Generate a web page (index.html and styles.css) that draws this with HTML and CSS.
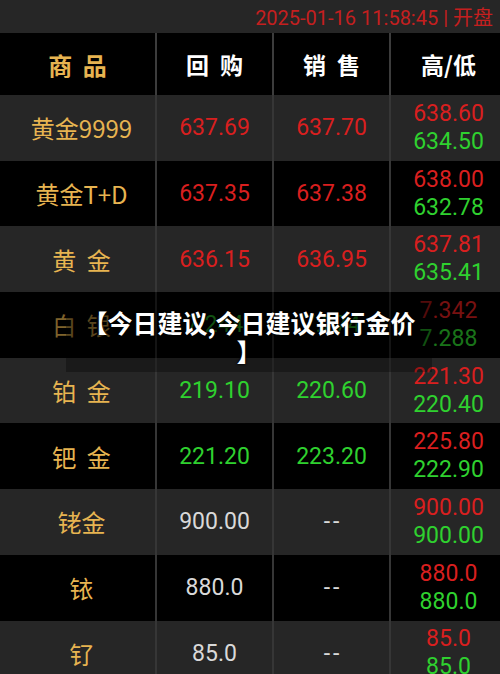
FILE: index.html
```html
<html lang="zh-CN">

<head>
    <meta charset="UTF-8">
    <meta name="viewport" content="width=device-width, initial-scale=1.0">
    <title>金价</title>
    <link rel="stylesheet" href="styles.css">
</head>

<body>
    <div class="topbar">2025-01-16 11:58:45 | 开盘</div>

    <div class="price-table">
        <div class="row head">
            <div class="cell name">商 品</div>
            <div class="cell">回 购</div>
            <div class="cell">销 售</div>
            <div class="cell hl">高/低</div>
        </div>
        <div class="row odd">
            <div class="cell name">黄金9999</div>
            <div class="cell num red">637.69</div>
            <div class="cell num red">637.70</div>
            <div class="cell hl num"><span class="red">638.60</span><span class="green">634.50</span></div>
        </div>
        <div class="row">
            <div class="cell name">黄金T+D</div>
            <div class="cell num red">637.35</div>
            <div class="cell num red">637.38</div>
            <div class="cell hl num"><span class="red">638.00</span><span class="green">632.78</span></div>
        </div>
        <div class="row odd">
            <div class="cell name">黄 金</div>
            <div class="cell num red">636.15</div>
            <div class="cell num red">636.95</div>
            <div class="cell hl num"><span class="red">637.81</span><span class="green">635.41</span></div>
        </div>
        <div class="row">
            <div class="cell name">白 银</div>
            <div class="cell num green">7.244</div>
            <div class="cell num green">7.274</div>
            <div class="cell hl num"><span class="red">7.342</span><span class="green">7.288</span></div>
        </div>
        <div class="row odd">
            <div class="cell name">铂 金</div>
            <div class="cell num green">219.10</div>
            <div class="cell num green">220.60</div>
            <div class="cell hl num"><span class="red">221.30</span><span class="green">220.40</span></div>
        </div>
        <div class="row">
            <div class="cell name">钯 金</div>
            <div class="cell num green">221.20</div>
            <div class="cell num green">223.20</div>
            <div class="cell hl num"><span class="red">225.80</span><span class="green">222.90</span></div>
        </div>
        <div class="row odd">
            <div class="cell name">铑金</div>
            <div class="cell num plain">900.00</div>
            <div class="cell num plain dash">--</div>
            <div class="cell hl num"><span class="red">900.00</span><span class="green">900.00</span></div>
        </div>
        <div class="row">
            <div class="cell name">铱</div>
            <div class="cell num plain">880.0</div>
            <div class="cell num plain dash">--</div>
            <div class="cell hl num"><span class="red">880.0</span><span class="green">880.0</span></div>
        </div>
        <div class="row odd">
            <div class="cell name">钌</div>
            <div class="cell num plain">85.0</div>
            <div class="cell num plain dash">--</div>
            <div class="cell hl num"><span class="red">85.0</span><span class="green">85.0</span></div>
        </div>

        <!-- title banner over the table -->
        <div class="banner">
            <div class="banner-title">【今日建议,今日建议银行金价<br>】</div>
        </div>
    </div>
</body>

</html>
```

FILE: styles.css
```css
body {
    margin: 0;
    background-color: #262626;
    font-family: Roboto, "Noto Sans CJK SC", sans-serif;
    overflow: hidden;
}

.topbar {
    height: 33px;
    display: flex;
    justify-content: flex-end;
    align-items: center;
    padding-right: 7px;
    color: #c41f1f;
    font-size: 20px;
}

.price-table {
    position: relative;
}

.row {
    display: grid;
    grid-template-columns: 155px 117px 117px 111px;
    height: 65.7px;
    background-color: #000;
}

.row.odd {
    background-color: #262626;
}

.row.head {
    height: 62px;
    color: #fff;
    font-family: "Noto Sans CJK SC", sans-serif;
    font-weight: 700;
    font-size: 23px;
    word-spacing: 6px;
}

.cell {
    display: flex;
    justify-content: center;
    align-items: center;
    border-left: 2px solid #363636;
}

.cell:first-child {
    border-left: none;
}

.row.head .cell {
    border-left-color: #3c3c3c;
}

.row.head .name {
    padding-left: 0;
}

.name {
    padding-left: 8px;
    color: #e7b451;
    font-family: "Noto Sans CJK SC", sans-serif;
    font-size: 24px;
    word-spacing: 5px;
}

.num {
    font-size: 23px;
}

.dash {
    letter-spacing: 3px;
    padding-left: 3px;
}

.hl {
    flex-direction: column;
    padding-left: 6px;
    line-height: 28px;
}

.red {
    color: #d91f1f;
}

.green {
    color: #2fd12f;
}

.plain {
    color: #d9d9d9;
}

.banner {
    position: absolute;
    top: 259px;
    left: 0;
    right: 0;
    height: 66px;
    background-color: rgba(0, 0, 0, 0.45);
}

.banner-title {
    margin: 0 68px 0 66px;
    height: 80px;
    box-sizing: border-box;
    padding-top: 16px;
    background-color: rgba(0, 0, 0, 0.3);
    color: #fff;
    font-family: "Noto Sans CJK SC", sans-serif;
    font-weight: 700;
    font-size: 25px;
    line-height: 29px;
    text-align: center;
    text-shadow: 0 0 3px #000, 0 0 2px #000;
    white-space: nowrap;
}
```
